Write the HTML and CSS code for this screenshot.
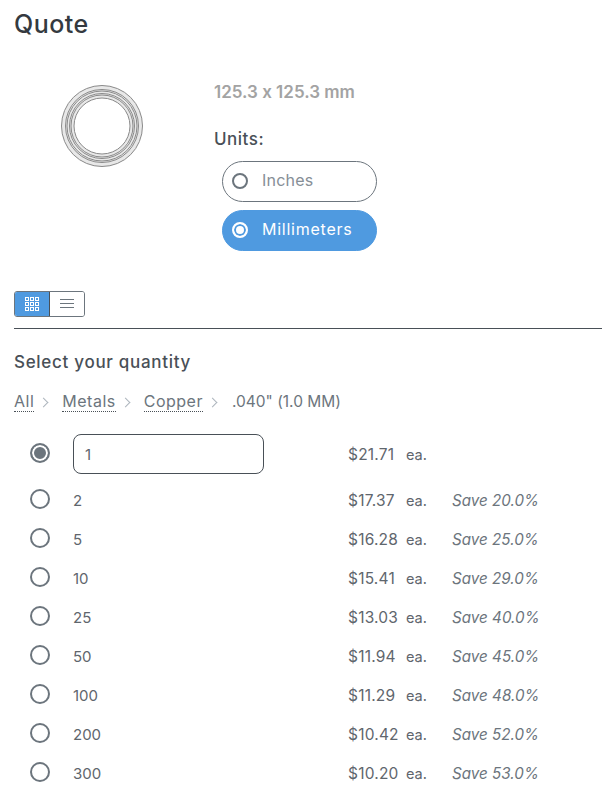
FILE: index.html
```html
<!DOCTYPE html>
<html lang="en">
<head>
    <meta charset="UTF-8">
    <meta name="viewport" content="width=device-width, initial-scale=1.0">
    <title>Quote</title>
    <link rel="stylesheet" href="styles.css">
</head>
<body>
    <h1 class="title">Quote</h1>

    <div class="part">
        <div class="part-image">
            <svg width="84" height="84" viewBox="0 0 84 84">
                <circle cx="42" cy="42" r="40.5" fill="#e8e8e8" stroke="#8a8a8a" stroke-width="1"/>
                <circle cx="42" cy="42" r="36.5" fill="none" stroke="#8a8a8a" stroke-width="1"/>
                <circle cx="42" cy="42" r="35" fill="none" stroke="#8a8a8a" stroke-width="1"/>
                <circle cx="42" cy="42" r="32.5" fill="none" stroke="#8a8a8a" stroke-width="1"/>
                <circle cx="42" cy="42" r="31" fill="none" stroke="#8a8a8a" stroke-width="1"/>
                <circle cx="42" cy="42" r="28" fill="#fff" stroke="#8a8a8a" stroke-width="1"/>
            </svg>
        </div>
        <div class="part-info">
            <div class="size">125.3 x 125.3 mm</div>
            <div class="units-label">Units:</div>
            <div class="units">
                <label class="pill">
                    <span class="radio-small"></span>
                    <span class="pill-text">Inches</span>
                </label>
                <label class="pill pill-active">
                    <span class="radio-small radio-small-on"></span>
                    <span class="pill-text">Millimeters</span>
                </label>
            </div>
        </div>
    </div>

    <div class="view-toggle">
        <button class="toggle-btn toggle-active">
            <svg width="16" height="16" viewBox="0 0 16 16" fill="none" stroke="#fff" stroke-width="1">
                <rect x="1.5" y="1.5" width="3" height="3"/>
                <rect x="6.5" y="1.5" width="3" height="3"/>
                <rect x="11.5" y="1.5" width="3" height="3"/>
                <rect x="1.5" y="6.5" width="3" height="3"/>
                <rect x="6.5" y="6.5" width="3" height="3"/>
                <rect x="11.5" y="6.5" width="3" height="3"/>
                <rect x="1.5" y="11.5" width="3" height="3"/>
                <rect x="6.5" y="11.5" width="3" height="3"/>
                <rect x="11.5" y="11.5" width="3" height="3"/>
            </svg>
        </button>
        <button class="toggle-btn">
            <svg width="16" height="16" viewBox="0 0 16 16" fill="none" stroke="#6c757d" stroke-width="1">
                <path d="M1 3.5h14M1 7.5h14M1 11.5h14"/>
            </svg>
        </button>
    </div>

    <hr class="divider">

    <h2 class="subtitle">Select your quantity</h2>

    <div class="crumbs">
        <a class="crumb">All</a><span class="sep"></span>
        <a class="crumb">Metals</a><span class="sep"></span>
        <a class="crumb">Copper</a><span class="sep"></span>
        <span class="crumb-last">.040" (1.0 MM)</span>
    </div>

    <div class="qty-list">
        <div class="qty-row qty-first">
            <span class="radio radio-on"></span>
            <span class="qty"><input class="qty-input" type="text" value="1"></span>
            <span class="price">$21.71</span><span class="ea">ea.</span>
        </div>
        <div class="qty-row"><span class="radio"></span><span class="qty">2</span><span class="price">$17.37</span><span class="ea">ea.</span><em class="save">Save 20.0%</em></div>
        <div class="qty-row"><span class="radio"></span><span class="qty">5</span><span class="price">$16.28</span><span class="ea">ea.</span><em class="save">Save 25.0%</em></div>
        <div class="qty-row"><span class="radio"></span><span class="qty">10</span><span class="price">$15.41</span><span class="ea">ea.</span><em class="save">Save 29.0%</em></div>
        <div class="qty-row"><span class="radio"></span><span class="qty">25</span><span class="price">$13.03</span><span class="ea">ea.</span><em class="save">Save 40.0%</em></div>
        <div class="qty-row"><span class="radio"></span><span class="qty">50</span><span class="price">$11.94</span><span class="ea">ea.</span><em class="save">Save 45.0%</em></div>
        <div class="qty-row"><span class="radio"></span><span class="qty">100</span><span class="price">$11.29</span><span class="ea">ea.</span><em class="save">Save 48.0%</em></div>
        <div class="qty-row"><span class="radio"></span><span class="qty">200</span><span class="price">$10.42</span><span class="ea">ea.</span><em class="save">Save 52.0%</em></div>
        <div class="qty-row"><span class="radio"></span><span class="qty">300</span><span class="price">$10.20</span><span class="ea">ea.</span><em class="save">Save 53.0%</em></div>
    </div>
</body>
</html>
```

FILE: styles.css
```css
body {
    font-family: Inter, "Liberation Sans", sans-serif;
    font-feature-settings: "calt" 0;
    color: #495057;
    background-color: #fff;
    margin: 0;
    padding: 0 0 0 14px;
    font-size: 15px;
}
.title {
    font-size: 25px;
    font-weight: 500;
    letter-spacing: 0.5px;
    color: #343a40;
    line-height: 28px;
    margin: 0;
    padding-top: 10px;
}
.part {
    display: flex;
    margin-top: 44px;
}
.part-image {
    width: 200px;
    padding: 0 0 0 46px;
    margin-top: 2px;
    box-sizing: border-box;
}
.size {
    font-size: 17px;
    font-weight: 600;
    color: #a3a3a3;
    line-height: 24px;
    margin-top: -2px;
}
.units-label {
    font-size: 17px;
    font-weight: 500;
    letter-spacing: 0.5px;
    line-height: 24px;
    margin-top: 23px;
}
.units {
    display: flex;
    flex-direction: column;
    gap: 8px;
    margin: 10px 0 0 8px;
}
.pill {
    display: flex;
    align-items: center;
    gap: 14px;
    width: 155px;
    height: 41px;
    box-sizing: border-box;
    padding-left: 9px;
    border: 1px solid #6c757d;
    border-radius: 21px;
    color: #868e96;
    font-size: 16px;
    letter-spacing: 0.2px;
}
.pill-text {
    padding-bottom: 3px;
}
.pill-active {
    background-color: #4f9ae0;
    border-color: #4f9ae0;
    color: #fff;
    letter-spacing: 0.75px;
}
.radio-small {
    width: 16px;
    height: 16px;
    margin-bottom: 1px;
    border: 2px solid #6c757d;
    border-radius: 50%;
    box-sizing: border-box;
}
.radio-small-on {
    border-color: #fff;
    background-color: #fff;
    box-shadow: inset 0 0 0 2px #4f9ae0;
}
.view-toggle {
    display: flex;
    width: 71px;
    height: 26px;
    margin-top: 40px;
    box-sizing: border-box;
    border: 1px solid #6c757d;
    border-radius: 3px;
    overflow: hidden;
}
.toggle-btn {
    flex: 1;
    display: flex;
    align-items: center;
    justify-content: center;
    padding: 0;
    border: none;
    background-color: #fff;
}
.toggle-active {
    background-color: #4f9ae0;
    border-right: 1px solid #495057;
}
.divider {
    border: none;
    border-top: 1px solid #495057;
    margin: 11px 0 0;
}
.subtitle {
    font-size: 17px;
    font-weight: 500;
    letter-spacing: 0.7px;
    line-height: 24px;
    margin: 21px 0 0;
}
.crumbs {
    display: flex;
    align-items: center;
    line-height: 22px;
    margin-top: 17px;
    color: #6c757d;
    font-size: 16px;
}
.crumb {
    border-bottom: 1px dotted #495057;
    line-height: 19px;
    letter-spacing: 0.5px;
}
.crumb-last {
    font-size: 15.5px;
    margin-left: 1px;
}
.sep {
    width: 7px;
    height: 7px;
    margin: 0 15px 0 6px;
    box-sizing: border-box;
    border-top: 1px solid #adb5bd;
    border-right: 1px solid #adb5bd;
    transform: rotate(45deg);
}
.qty-list {
    margin-top: 20px;
}
.qty-row {
    display: flex;
    align-items: center;
    height: 39px;
}
.qty-first {
    height: 42px;
    margin-bottom: 6px;
}
.radio {
    width: 20px;
    height: 20px;
    margin-left: 16px;
    margin-bottom: 3px;
    box-sizing: border-box;
    border: 2px solid #6c757d;
    border-radius: 50%;
}
.radio-on {
    background-color: #6c757d;
    box-shadow: inset 0 0 0 2px #fff;
}
.qty {
    width: 275px;
    margin-left: 23px;
    font-size: 15px;
    color: #5f666d;
}
.qty-input {
    width: 191px;
    height: 40px;
    box-sizing: border-box;
    padding: 0 11px;
    border: 1px solid #495057;
    border-radius: 8px;
    font-family: inherit;
    font-size: 15px;
    color: #5f666d;
}
.price {
    width: 58px;
    font-size: 15.5px;
    letter-spacing: 0.2px;
    color: #5f666d;
}
.ea {
    width: 46px;
    font-size: 14.5px;
    color: #5f666d;
}
.save {
    font-size: 15.2px;
    color: #6c757d;
}
```
